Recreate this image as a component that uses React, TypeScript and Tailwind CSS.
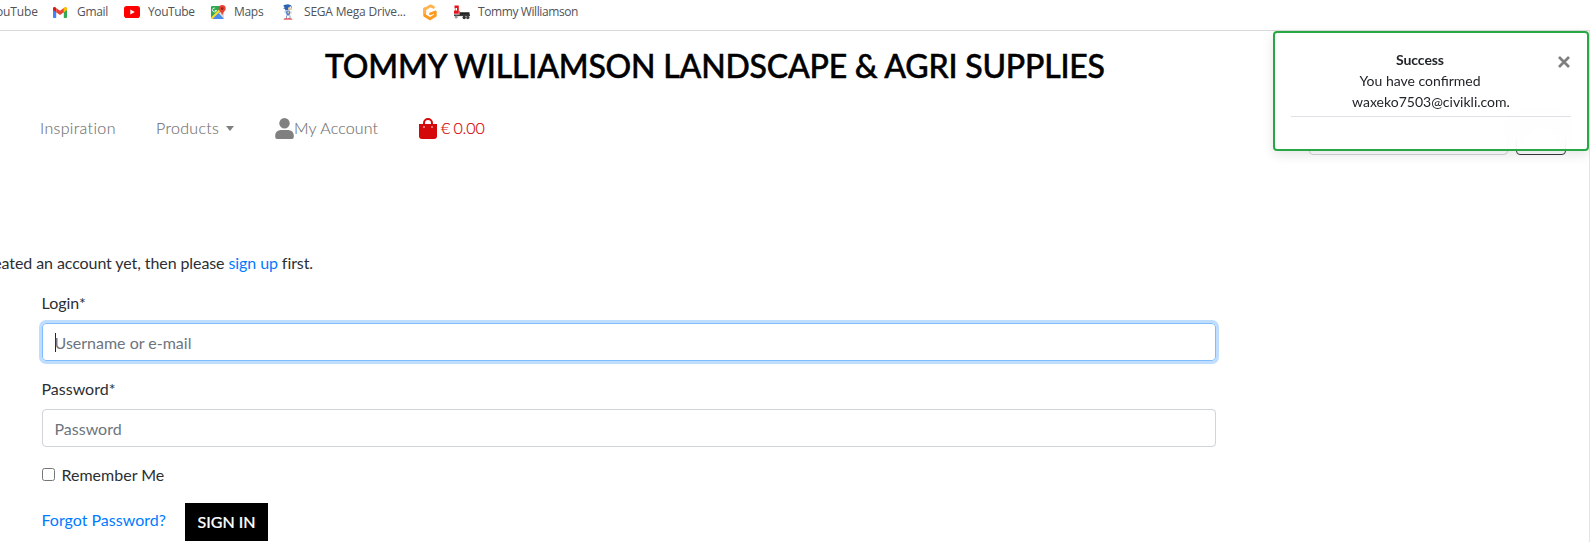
import React from "react";

function Bookmark({ className, children, label }: { className: string; children?: React.ReactNode; label?: string }) {
  return (
    <div className={`flex h-6 shrink-0 items-center whitespace-nowrap ${className}`}>
      {children}
      {label && <span>{label}</span>}
    </div>
  );
}

function GmailIcon() {
  return (
    <svg className="mr-[10px] h-[11px] w-[14px]" viewBox="0 0 14 11">
      <path d="M0 1.5V10c0 .6.4 1 1 1h2.2V5.2z" fill="#4285f4" />
      <path d="M14 1.5V10c0 .6-.4 1-1 1h-2.2V5.2z" fill="#34a853" />
      <path d="M10.8 1v4.2L14 2.9V1.5C14 0 12.400-.4 11.400.4z" fill="#fbbc04" />
      <path d="M3.200 1v4.200L0 2.900V1.500C0 0 1.600-.4 2.600.4z" fill="#c5221f" />
      <path d="M3.2 5.200V.9L7 3.800 10.800.9v4.300L7 8.100z" fill="#ea4335" />
    </svg>
  );
}

function YouTubeIcon() {
  return (
    <svg className="mr-[8px] h-[12px] w-[16px]" viewBox="0 0 16 12">
      <rect width="16" height="12" rx="2.800" fill="#f00" />
      <path d="M6.300 3.400v5.200L10.800 6z" fill="#fff" />
    </svg>
  );
}

function MapsIcon() {
  return (
    <svg className="mr-[8px] h-[15px] w-[15px]" viewBox="0 0 15 15">
      <rect y="1" width="13" height="13" rx="1" fill="#2da94f" />
      <path d="M1 14L7 7.500l6 6.500z" fill="#4a8af4" />
      <path d="M13 5v9L7.500 8z" fill="#dcdcdc" />
      <path d="M0 12.500L11.500 1 13 2.500 1.500 14H0z" fill="#fdd835" />
      <path d="M2.500 14L7.200 9.200 12 14z" fill="#4a8af4" />
      <path d="M3.800 3a2 2 0 1 0 1.700 2.400H3.800" fill="none" stroke="#fff" strokeWidth=".9" />
      <path d="M11.200 0a3.500 3.500 0 0 0-3.500 3.500c0 2.600 2.700 3.200 3.300 6.500h.4c.6-3.300 3.300-3.900 3.300-6.500A3.500 3.500 0 0 0 11.200 0z" fill="#ea4335" />
      <circle cx="11.200" cy="3.500" r="1.200" fill="#8c1f17" />
    </svg>
  );
}

function HedgehogIcon() {
  return (
    <svg className="mr-[11px] h-[16px] w-[10px]" viewBox="0 0 10 16">
      <path d="M1 1l4-.8 3 1L9 3.500 8 6H4L2 6.500 2.200 5 .2 4.500l1.500-1.300L.3 2z" fill="#2c63b4" />
      <path d="M5 3.500l3.500-.5.5 2L7 6.500 5 5.500z" fill="#e8c9a0" />
      <path d="M6.800 2.300h1v2h-1z" fill="#fff" />
      <path d="M1.500 7h1.500v2H1.500zM7.200 7.500h1.500v2H7.200z" fill="#c3d3e6" />
      <path d="M3.500 6.500h3l.8 2.500-1 2.500H4l-1-2.500z" fill="#4a7cc8" />
      <path d="M4.500 7.500h1.700v2H4.500z" fill="#e8c9a0" />
      <path d="M3 11.500h1v2.500H3zM6.500 11.500h1v2.500h-1z" fill="#7fa1d6" />
      <path d="M1 14.400l3-.7.8.7 1-.7 3 .9.700 1.200H.5z" fill="#e0606a" />
    </svg>
  );
}

function GIcon() {
  return (
    <svg className="h-[17px] w-4" viewBox="0 0 16 17" fill="none" strokeLinejoin="round">
      <path d="M2.700 5v6.500L8 14.800l5.300-3.300V8L8.500 9.800" stroke="#ff9a1f" strokeWidth="2.800" strokeLinecap="round" />
      <path d="M11.500 3.200L8.500 1.900 2.700 5.200v3.500" stroke="#ffb24d" strokeWidth="2.800" strokeLinecap="round" />
    </svg>
  );
}

function TruckIcon() {
  return (
    <svg className="mr-[8px] h-[15px] w-[16px]" viewBox="0 0 16 15">
      <path d="M.5.5h4.300v8.200H0V5.500h1V3.500H.5z" fill="#e3141c" />
      <path d="M1.500 3h1.500v2.500H1.500z" fill="#fff" />
      <path d="M6 7.200h9.500v3.300H5.500z" fill="#222" />
      <path d="M0 9.500h16v1.600H0z" fill="#3b3b3b" />
      <circle cx="2.200" cy="12" r="1.500" fill="#999" />
      <circle cx="10.200" cy="12.500" r="1.700" fill="#333" />
      <circle cx="13.800" cy="12.500" r="1.700" fill="#444" />
      <path d="M5 6.200h1v3H5z" fill="#777" />
    </svg>
  );
}

function BookmarksBar() {
  return (
    <div className="flex h-[31px] shrink-0 border-b border-[#dadada] font-['Open_Sans',sans-serif] text-[12px] text-[#505357]">
      <Bookmark className="-ml-[4px] w-[57px] -tracking-[0.150px]" label="ouTube" />
      <Bookmark className="w-[71px] -tracking-[0.300px]" label="Gmail"><GmailIcon /></Bookmark>
      <Bookmark className="w-[87px] -tracking-[0.400px]" label="YouTube"><YouTubeIcon /></Bookmark>
      <Bookmark className="w-[72px] -tracking-[0.300px]" label="Maps"><MapsIcon /></Bookmark>
      <Bookmark className="w-[139px] -tracking-[0.200px]" label="SEGA Mega Drive..."><HedgehogIcon /></Bookmark>
      <Bookmark className="w-[32px]"><GIcon /></Bookmark>
      <Bookmark className="-tracking-[0.400px]" label="Tommy Williamson"><TruckIcon /></Bookmark>
    </div>
  );
}

function Nav() {
  return (
    <nav className="flex h-6 items-center pl-10 text-[16px] leading-6 font-light text-[#6e6e6e] [-webkit-text-stroke:0.100px_#6e6e6e]">
      <span className="w-[115px] tracking-[0.350px]">Inspiration</span>
      <span className="flex w-[120px] items-center pl-px tracking-[0.320px]">
        Products
        <span className="ml-[7px] border-x-[4.500px] border-t-[5px] border-x-transparent border-t-[#808080]" />
      </span>
      <span className="flex w-[143px] items-center tracking-[0.150px]">
        <svg className="h-[21px] w-[19px]" viewBox="0 0 19 21" fill="#808080">
          <circle cx="9.500" cy="5.300" r="5.200" />
          <path d="M5.700 12h7.600a5.500 5.500 0 0 1 5.500 5.500V19a2 2 0 0 1-2 2H2.200a2 2 0 0 1-2-2v-1.500A5.500 5.500 0 0 1 5.700 12z" />
        </svg>
        My Account
      </span>
      <span className="flex items-center -tracking-[0.100px] [word-spacing:-1px] text-[#d40909] [-webkit-text-stroke:0.200px_#d40909]">
        <svg className="mr-1 ml-px h-[21px] w-[18px]" viewBox="0 0 18 21" fill="#d40909">
          <path d="M0 6h18v12a3 3 0 0 1-3 3H3a3 3 0 0 1-3-3z" />
          <path d="M5 7V5a4 4 0 0 1 8 0v2" fill="none" stroke="#d40909" strokeWidth="2" />
          <circle cx="5" cy="9" r="0.800" fill="#fff" />
          <circle cx="13" cy="9" r="0.800" fill="#fff" />
        </svg>
        € 0.00
      </span>
    </nav>
  );
}

function Toast() {
  return (
    <div className="absolute top-[31px] left-[1273px] h-[120px] w-[316px] rounded-[4px] border-2 border-[#28a745] bg-white/85 px-4 pt-[16px] text-[14px] leading-[21px] text-[#212529] shadow-[0_4px_12px_rgba(0,0,0,0.1)] backdrop-blur-[10px]">
      <div className="flex h-[68px] justify-center border-b border-[#dee2e6] text-center">
        <div className="pr-[22px]">
          <strong className="block font-bold -tracking-[0.100px]">Success</strong>
          <span className="block">You have confirmed</span>
          <span className="block pl-[22px]">waxeko7503@civikli.com.</span>
        </div>
      </div>
      <svg className="absolute top-[23px] right-[17px] h-[12px] w-[12px]" viewBox="0 0 12 12">
        <path d="M1 1l10 10M11 1L1 11" stroke="#7f7f7f" strokeWidth="2.700" />
      </svg>
    </div>
  );
}

export default function App() {
  return (
    <div className="relative flex h-[542px] w-[1590px] flex-col overflow-hidden bg-white font-['Lato',sans-serif] text-[16px] leading-6 text-[#2b2f33]">
      <BookmarksBar />
      <main className="flex grow flex-col border-r border-[#e4e4e4]">
        <h1 className="mt-[15px] h-10 pl-[325px] text-[32px] leading-10 font-medium -tracking-[0.200px] whitespace-nowrap text-black [-webkit-text-stroke:0.500px_#000]">
          TOMMY WILLIAMSON LANDSCAPE &amp; AGRI SUPPLIES
        </h1>
        <div className="mt-[30px] flex h-[39px] items-start justify-between pr-[23px]">
          <Nav />
          <div className="mt-px flex gap-2">
            <div className="h-[38px] w-[199px] rounded-[4px] border border-[#ced4da]" />
            <div className="h-[38px] w-[50px] rounded-[4px] border border-[#343a40]" />
          </div>
        </div>
        <p className="mt-[96px] flex w-[313px] justify-end -tracking-[0.090px] whitespace-pre">
          eated an account yet, then please <a className="text-[#007bff]">sign up</a> first.
        </p>
        <form className="ml-[42px] w-[1174px]">
          <label className="mt-4 -ml-[0.500px] block h-6">Login*</label>
          <div className="mt-2 flex h-[38px] items-center rounded-[4px] border border-[#80bdff] pt-px pl-3 text-[#6c757d] shadow-[0_0_0_3px_#bfdeff]">
            <span className="-mr-px -mt-px h-[19px] w-px bg-[#212529]" />
            <span className="-ml-[0.500px]">Username or e-mail</span>
          </div>
          <label className="mt-4 -ml-[0.500px] block h-6">Password*</label>
          <div className="mt-2 flex h-[38px] items-center rounded-[4px] border border-[#ced4da] pt-px pl-[11.500px] text-[#6c757d]">
            Password
          </div>
          <div className="mt-4 flex h-6 items-center">
            <span className="-mt-px mr-[6.500px] size-[13px] rounded-[2.500px] border border-[#767676]" />
            Remember Me
          </div>
          <div className="mt-4 flex items-start">
            <a className="-ml-[0.500px] w-[143.500px] pt-[5px] text-[#007bff]">Forgot Password?</a>
            <button type="button" className="h-[38px] w-[83px] bg-black font-medium whitespace-nowrap text-white [-webkit-text-stroke:0.200px_#fff]">SIGN IN</button>
          </div>
        </form>
      </main>
      <Toast />
    </div>
  );
}
